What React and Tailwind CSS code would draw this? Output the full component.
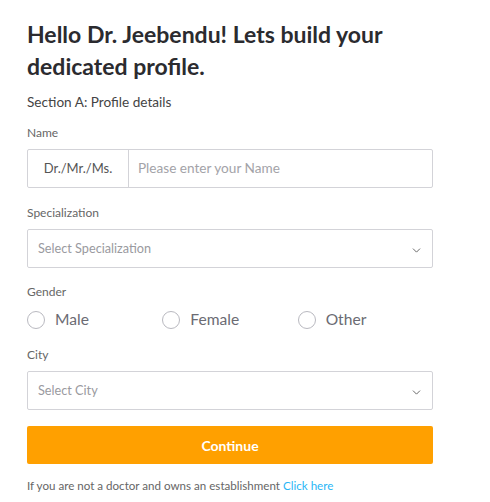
import { ChevronDown } from 'lucide-react';

const Label = ({ children }) => (
  <div className="text-[12px] text-[#666] leading-[16px] mb-2">{children}</div>
);

const SelectBox = ({ placeholder }) => (
  <div className="h-[39px] border border-[#d3d3d8] rounded-[2px] flex items-center justify-between pl-[10px] pr-[9px]">
    <span className="text-[12.7px] text-[#9a9aa0]">{placeholder}</span>
    <ChevronDown size={13} strokeWidth={1.8} className="text-[#666] mt-[3px]" />
  </div>
);

const Radio = ({ label }) => (
  <label className="flex items-center gap-[10px]">
    <span className="w-[18px] h-[18px] rounded-full border border-[#b9b9c0] bg-white" />
    <span className="text-[15.6px] text-[#6b6b73]">{label}</span>
  </label>
);

export default function App() {
  return (
    <div className="min-h-[502px] bg-white font-['Lato','Noto_Sans',sans-serif]">
      <div className="w-[406px] ml-[27px] pt-[18px]">
        <h1 className="text-[23px] font-bold leading-[32px] text-[#2b2b2f]">
          Hello Dr. Jeebendu! Lets build your dedicated profile.
        </h1>
        <div className="text-[13.6px] text-[#444] mt-[11px] leading-[18px]">Section A: Profile details</div>

        <div className="mt-[14px]">
          <Label>Name</Label>
          <div className="h-[39px] flex border border-[#d3d3d8] rounded-[2px]">
            <div className="w-[101px] border-r border-[#d3d3d8] flex items-center justify-center text-[13px] text-[#555]">
              Dr./Mr./Ms.
            </div>
            <input
              className="flex-1 px-[9px] text-[13.6px] text-[#333] placeholder-[#a3a3a8] outline-none"
              placeholder="Please enter your Name"
            />
          </div>
        </div>

        <div className="mt-[17px]">
          <Label>Specialization</Label>
          <SelectBox placeholder="Select Specialization" />
        </div>

        <div className="mt-[16px]">
          <Label>Gender</Label>
          <div className="grid grid-cols-3">
            <Radio label="Male" />
            <Radio label="Female" />
            <Radio label="Other" />
          </div>
        </div>

        <div className="mt-[16px]">
          <Label>City</Label>
          <SelectBox placeholder="Select City" />
        </div>

        <button className="mt-[16px] w-full h-[38px] bg-[#ffa000] rounded-[2px] text-white font-bold text-[14px]">
          Continue
        </button>

        <p className="mt-[13px] text-[11.6px] text-[#666]">
          If you are not a doctor and owns an establishment <a className="text-[#29b6f6]">Click here</a>
        </p>
      </div>
    </div>
  );
}
